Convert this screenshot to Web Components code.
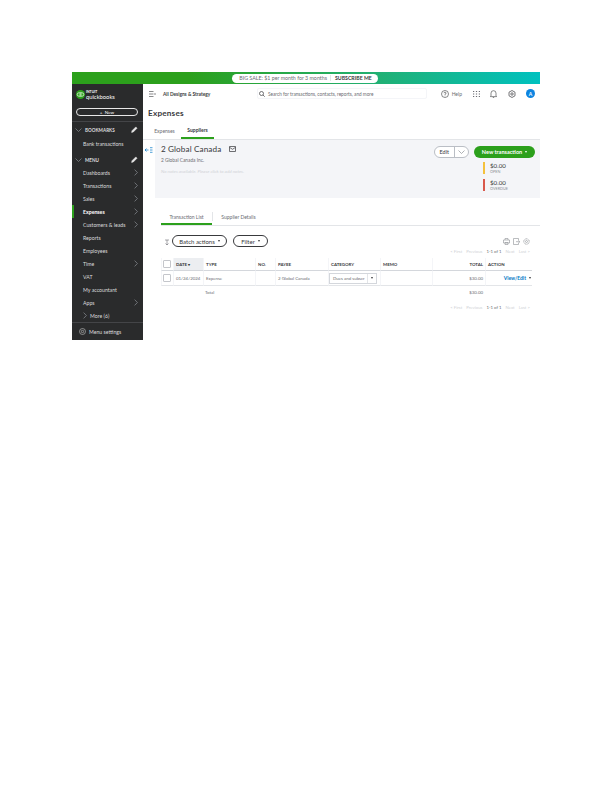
<!DOCTYPE html>
<html lang="en">
<head>
<meta charset="utf-8">
<title>Expenses</title>
<style>
  html, body { margin: 0; padding: 0; background: #fff; }
  body { padding: 72px 0 0 72px; font-family: Lato, "Open Sans", sans-serif; }
</style>
</head>
<body>
<qb-app></qb-app>
<script>
// ===== small helpers =====
function define(name, css, html) {
  customElements.define(name, class extends HTMLElement {
    constructor() {
      super();
      this.attachShadow({ mode: 'open' }).innerHTML = `<style>${css}</style>${typeof html === 'function' ? html(this) : html}`;
    }
  });
}

const chevron = '<svg width="4" height="7" viewBox="0 0 4 7"><path d="M.6.6 3.4 3.5.6 6.4" fill="none" stroke="#8d9096" stroke-width=".7"/></svg>';
const down = '<svg width="7" height="4" viewBox="0 0 7 4"><path d="M.5.5 3.5 3.5 6.5.5" fill="none" stroke="#8d9096" stroke-width=".7"/></svg>';
const pencil = '<svg width="7" height="7" viewBox="0 0 7 7"><path d="M.6 6.4 1 4.7 4.8.9 6.1 2.2 2.3 6Z" fill="#e8e8e8" stroke="#e8e8e8" stroke-width=".5"/></svg>';

define('promo-banner', `
  :host { display: flex; justify-content: center; align-items: center; height: 12px; background: linear-gradient(90deg, #2ca01c 0%, #2ca01c 25%, #21b073 65%, #00c1bf 100%); }
  .pill { display: flex; align-items: center; height: 9px; margin-right: 2px; padding: 0 6px 0 7px; border-radius: 5px; background: #fff; font-size: 5.3px; color: #6b6c72; white-space: nowrap; }
  b { margin-left: 3px; padding-left: 4px; border-left: 1px solid #e3e5e8; color: #393a3d; font-weight: 700; font-size: 5.2px; }
`, `<div class="pill">BIG SALE: $1 per month for 3 months<b>SUBSCRIBE ME</b></div>`);

define('side-item', `
  :host { display: flex; align-items: center; justify-content: space-between; height: 13px; padding: 0 5px 0 11px; font-size: 5.2px; color: #dcdcde; white-space: nowrap; }
  :host([active]) { box-shadow: inset 2px 0 0 #2ca01c; font-weight: 700; color: #fff; }
  :host([head]) { font-weight: 700; font-size: 4.6px; padding-left: 3px; }
  .l { display: flex; align-items: center; gap: 3px; }
`, el => `<span class="l"><slot name="pre"></slot><slot></slot></span><slot name="end"></slot>`);

define('qb-sidebar', `
  :host { display: flex; flex-direction: column; width: 71px; height: 256px; background: #2a2b2c; flex: none; }
  .logo { display: flex; align-items: center; gap: 1px; height: 20px; padding: 2px 0 0 4px; box-sizing: border-box; color: #fff; }
  .logo i { font-style: normal; display: block; font-size: 3.4px; font-weight: 700; line-height: 4px; }
  .logo span { display: block; font-size: 5.8px; line-height: 6px; }
  .new { display: flex; justify-content: center; align-items: center; height: 8px; box-sizing: border-box; margin: 4px 5px 5px 4px; border: 1px solid #e8e8e8; border-radius: 5px; color: #fff; font-size: 4.6px; }
  .sep { height: 1px; background: #444548; }
  .list { flex: 1; padding-top: 2px; }
  .g1 { height: 1px; }
  .g3 { height: 3px; }
  .foot { display: flex; align-items: center; gap: 3px; height: 17px; padding-left: 7px; border-top: 1px solid #444548; color: #dcdcde; font-size: 5.2px; }
`, `
  <div class="logo">
    <svg width="9" height="9" viewBox="0 0 11 11"><circle cx="5.5" cy="5.5" r="5.5" fill="#2ca01c"/><path d="M4.4 3.4H3.6a2 2 0 0 0 0 4.2h.8M6.6 7.6h.8a2 2 0 0 0 0-4.2h-.8M4.9 2.6v6M6.1 2.4v6" fill="none" stroke="#fff" stroke-width=".8"/></svg>
    <div><i>INTUIT</i><span>quickbooks</span></div>
  </div>
  <div class="new">+&nbsp;&nbsp;New</div>
  <div class="sep"></div>
  <div class="list">
    <side-item head><span slot="pre">${down}</span>BOOKMARKS<span slot="end">${pencil}</span></side-item>
    <div class="g1"></div>
    <side-item>Bank transactions</side-item>
    <div class="g3"></div>
    <side-item head><span slot="pre">${down}</span>MENU<span slot="end">${pencil}</span></side-item>
    <side-item>Dashboards<span slot="end">${chevron}</span></side-item>
    <side-item>Transactions<span slot="end">${chevron}</span></side-item>
    <side-item>Sales<span slot="end">${chevron}</span></side-item>
    <side-item active>Expenses<span slot="end">${chevron}</span></side-item>
    <side-item>Customers &amp; leads<span slot="end">${chevron}</span></side-item>
    <side-item>Reports</side-item>
    <side-item>Employees</side-item>
    <side-item>Time<span slot="end">${chevron}</span></side-item>
    <side-item>VAT</side-item>
    <side-item>My accountant</side-item>
    <side-item>Apps<span slot="end">${chevron}</span></side-item>
    <side-item><span slot="pre">${chevron}</span>More (6)</side-item>
  </div>
  <div class="foot"><svg width="7" height="7" viewBox="0 0 7 7"><circle cx="3.5" cy="3.5" r="3" fill="none" stroke="#c8c8c8" stroke-width=".6"/><circle cx="3.5" cy="3.5" r="1.2" fill="none" stroke="#c8c8c8" stroke-width=".6"/></svg>Menu settings</div>
`);

define('qb-topbar', `
  :host { display: flex; align-items: center; height: 19px; padding: 0 5px 0 6px; font-size: 5px; color: #393a3d; white-space: nowrap; }
  .co { margin-left: 7px; width: 94px; font-weight: 700; font-size: 4.8px; }
  .search { display: flex; align-items: center; gap: 3px; width: 170px; height: 11px; padding-left: 1px; box-sizing: border-box; border: 1px solid #f4f5f8; border-radius: 2px; color: #6b6c72; font-size: 4.7px; }
  .ic { display: flex; align-items: center; gap: 3px; color: #6b6c72; }
  .right { display: flex; align-items: center; gap: 10.5px; margin-left: auto; }
  .av { width: 9px; height: 9px; border-radius: 50%; background: #0d84e0; color: #fff; font-size: 5px; font-weight: 700; display: flex; align-items: center; justify-content: center; }
`, `
  <svg width="7" height="6" viewBox="0 0 7 6"><path d="M0 .5h4.5M0 3h4.5M0 5.5h4.5M5.5 2l1 1-1 1" fill="none" stroke="#393a3d" stroke-width=".6"/></svg>
  <span class="co">All Designs &amp; Strategy</span>
  <div class="search"><svg width="6" height="6" viewBox="0 0 6 6"><circle cx="2.5" cy="2.5" r="2" fill="none" stroke="#393a3d" stroke-width=".7"/><path d="M4 4l1.7 1.7" stroke="#393a3d" stroke-width=".7"/></svg>Search for transactions, contacts, reports, and more</div>
  <div class="right">
    <span class="ic"><svg width="8" height="8" viewBox="0 0 8 8"><circle cx="4" cy="4" r="3.5" fill="none" stroke="#393a3d" stroke-width=".6"/><path d="M3 3.2a1 1 0 1 1 1 1v.7M4 5.600v.6" fill="none" stroke="#393a3d" stroke-width=".6"/></svg>Help</span>
    <svg width="7" height="6" viewBox="0 0 7 6" fill="#6b6c72"><path d="M0 0h1.200v1H0zM2.900 0h1.200v1H2.900zM5.800 0H7v1H5.800zM0 2.500h1.200v1H0zM2.900 2.500h1.200v1H2.900zM5.800 2.500H7v1H5.800zM0 5h1.200v1H0zM2.900 5h1.200v1H2.900zM5.800 5H7v1H5.800z"/></svg>
    <svg width="7" height="8" viewBox="0 0 7 8"><path d="M1 6V3.200a2.500 2.500 0 0 1 5 0V6l.6.6H.4ZM2.800 7.500h1.400" fill="none" stroke="#393a3d" stroke-width=".6"/></svg>
    <svg width="8" height="8" viewBox="0 0 8 8"><path d="M4 .5 7 2.200v3.600L4 7.500 1 5.800V2.200Z" fill="none" stroke="#393a3d" stroke-width=".7"/><circle cx="4" cy="4" r="1.200" fill="none" stroke="#393a3d" stroke-width=".7"/></svg>
    <span class="av">A</span>
  </div>
`);

define('tab-row', `
  :host { display: flex; border-bottom: 1px solid #e3e5e8; font-size: 5px; color: #6b6c72; white-space: nowrap; }
  ::slotted(span) { display: block; }
`, `<slot></slot>`);

define('summary-stat', `
  :host { display: flex; align-items: stretch; gap: 5px; height: 12px; color: #6b6c72; }
  i { width: 2px; background: var(--c); }
  b { display: block; font-weight: 400; font-size: 6.2px; line-height: 7px; color: #393a3d; }
  span { display: block; font-size: 3.8px; line-height: 5px; color: #8d9096; }
`, el => `<i style="--c:${el.getAttribute('color')}"></i><div><b>$0.00</b><span>${el.getAttribute('label')}</span></div>`);

define('supplier-panel', `
  :host { display: flex; justify-content: space-between; position: relative; height: 58px; margin-left: 12px; padding: 3px 5px 0 6px; box-sizing: border-box; background: #f4f5f8; color: #393a3d; white-space: nowrap; }
  .handle { position: absolute; left: -10px; top: 7px; display: flex; }
  h2 { display: flex; align-items: center; gap: 8px; margin: 0; height: 12px; font-weight: 400; font-size: 8.2px; letter-spacing: .1px; }
  p { margin: 2px 0 0; font-size: 4.8px; color: #6b6c72; }
  .note { margin-top: 6px; font-style: italic; color: #d0d2d6; font-size: 4.5px; }
  .right { width: 100px; display: flex; flex-direction: column; align-items: flex-end; }
  .btns { display: flex; align-items: center; gap: 5px; height: 12px; margin-top: 3px; }
  .edit { display: flex; align-items: center; height: 12px; box-sizing: border-box; border: 1px solid #babec5; border-radius: 6px; font-size: 5.5px; background: #fff; }
  .edit span { padding: 0 5px; line-height: 10px; }
  .edit em { display: flex; align-items: center; height: 10px; padding: 0 3px; border-left: 1px solid #babec5; }
  .new { display: flex; align-items: center; justify-content: center; gap: 3px; width: 61px; height: 12px; border-radius: 6px; background: #2ca01c; color: #fff; font-size: 5.5px; font-weight: 700; }
  .new u { width: 0; height: 0; border: 1.5px solid transparent; border-top: 2px solid #fff; border-bottom: 0; }
  .stats { align-self: flex-end; width: 52px; margin-top: 4px; display: flex; flex-direction: column; gap: 5px; }
`, `
  <div class="handle"><svg width="8" height="6" viewBox="0 0 8 6"><path d="M3.5 3H0M1.5 1.500 0 3l1.500 1.500M5 .7h2.500M5 3h2.500M5 5.300h2.500" fill="none" stroke="#0077c5" stroke-width=".7"/></svg></div>
  <div>
    <h2>2 Global Canada<svg width="7" height="6" viewBox="0 0 7 6"><rect x=".4" y=".4" width="6.2" height="5.2" rx=".5" fill="none" stroke="#393a3d" stroke-width=".8"/><path d="M.6 1.4 3.500 3.300 6.400 1.400" fill="none" stroke="#393a3d" stroke-width=".7"/></svg></h2>
    <p>2 Global Canada Inc.</p>
    <p class="note">No notes available. Please click to add notes.</p>
  </div>
  <div class="right">
    <div class="btns">
      <div class="edit"><span>Edit</span><em>${down}</em></div>
      <div class="new">New transaction <u></u></div>
    </div>
    <div class="stats">
      <summary-stat color="#f4c13d" label="OPEN"></summary-stat>
      <summary-stat color="#d9594c" label="OVERDUE"></summary-stat>
    </div>
  </div>
`);

define('qb-button', `
  :host { display: inline-flex; align-items: center; justify-content: center; gap: 3px; height: 12px; box-sizing: border-box; border: 1px solid #393a3d; border-radius: 6px; font-size: 6px; color: #393a3d; white-space: nowrap; }
  u { width: 0; height: 0; border: 1.5px solid transparent; border-top: 2px solid #393a3d; border-bottom: 0; }
`, `<slot></slot><u></u>`);

define('pager-line', `
  :host { display: flex; justify-content: flex-end; gap: 4px; font-size: 4.3px; color: #d0d2d6; white-space: nowrap; }
  b { font-weight: 400; color: #6b6c72; }
`, `<span>&lt; First</span><span>Previous</span><b>1-1 of 1</b><span>Next</span><span>Last &gt;</span>`);

define('tx-table', `
  :host { display: block; font-size: 4.4px; color: #6b6c72; white-space: nowrap; }
  .grid { display: grid; grid-template-columns: 12px 30px 52px 20px 53px 52px 52px 53px 47px; }
  .grid > div { display: flex; align-items: center; padding-left: 2px; box-sizing: border-box; }
  .h > div { height: 13px; font-weight: 700; color: #393a3d; border-left: 1px solid #f4f5f8; border-bottom: 1px solid #d4d7dc; }
  .h > .s { background: #eceef1; }
  .r > div { height: 15px; border-left: 1px solid #f4f5f8; border-bottom: 1px solid #e3e5e8; }
  .t > div { height: 13px; }
  .grid > .c { padding-left: 1px; }
  .grid > .cat { padding-left: 0; }
  .n { justify-content: flex-end; padding-right: 2px; }
  .cb { width: 8px; height: 8px; box-sizing: border-box; border: 1px solid #c4c6cb; border-radius: 1px; background: #fff; flex: none; }
  .sel { display: flex; align-items: center; justify-content: space-between; width: 48px; height: 11px; padding: 0 0 0 3px; border: 1px solid #d4d7dc; box-sizing: border-box; }
  .sel em { height: 100%; padding: 0 3px; border-left: 1px solid #e3e5e8; display: flex; align-items: center; }
  u { width: 0; height: 0; border: 1.5px solid transparent; border-top: 2px solid #393a3d; border-bottom: 0; }
  .a { color: #0077c5; font-weight: 700; justify-content: flex-end; gap: 3px; padding-right: 1px; font-size: 5px; }
`, `
  <div class="grid h">
    <div class="c"><span class="cb"></span></div><div class="s">DATE&nbsp;▾</div><div>TYPE</div><div>NO.</div><div>PAYEE</div><div>CATEGORY</div><div>MEMO</div><div class="n">TOTAL</div><div>ACTION</div>
  </div>
  <div class="grid r">
    <div class="c"><span class="cb"></span></div><div>01/24/2024</div><div>Expense</div><div></div><div>2 Global Canada</div><div class="cat"><span class="sel">Dues and subscr<em><u></u></em></span></div><div></div><div class="n">$30.00</div><div class="a">View/Edit <u></u></div>
  </div>
  <div class="grid t">
    <div></div><div></div><div>Total</div><div></div><div></div><div></div><div></div><div class="n">$30.00</div><div></div>
  </div>
`);

define('qb-main', `
  :host { display: block; width: 397px; height: 256px; color: #393a3d; }
  h1 { margin: 0; height: 20px; padding: 0 0 0 5px; font-size: 8.2px; line-height: 20px; font-weight: 700; letter-spacing: .2px; }
  tab-row.top { height: 16px; padding-left: 5px; }
  .t { display: flex; height: 15px; align-items: center; justify-content: center; box-sizing: border-box; }
  .on { border-bottom: 2px solid #2ca01c; height: 16px; color: #393a3d; font-weight: 700; }
  .body { padding: 12px 8px 0 18px; }
  tab-row.inner { height: 15px; margin-right: -8px; }
  .inner .t { height: 13px; margin-top: 2px; }
  .tools { position: relative; display: flex; align-items: center; gap: 6px; margin-top: 9px; padding-left: 11px; height: 12px; }
  .sort { position: absolute; left: 3px; top: 4px; }
  .sideicons { position: absolute; right: 2px; top: 3px; display: flex; gap: 3px; }
  .pg1 { height: 8px; margin: 2px 2px 1px 0; }
  .pg2 { margin: 6px 2px 0 0; }
`, `
  <qb-topbar></qb-topbar>
  <h1>Expenses</h1>
  <tab-row class="top"><span class="t" style="width:33px">Expenses</span><span class="t on" style="width:33px">Suppliers</span></tab-row>
  <supplier-panel></supplier-panel>
  <div class="body">
    <tab-row class="inner"><span class="t on" style="width:51px;height:15px;margin:0;font-weight:400;color:#6b6c72">Transaction List</span><span class="t" style="width:52px;height:9px;margin-top:2px;border-left:1px solid #e3e5e8">Supplier Details</span></tab-row>
    <div class="tools">
      <svg class="sort" width="6" height="7" viewBox="0 0 6 7"><path d="M1 1h4M3 1v5M1.5 4.5 3 6l1.500-1.500" fill="none" stroke="#6b6c72" stroke-width=".6"/></svg>
      <qb-button style="width:55px">Batch actions</qb-button>
      <qb-button style="width:35px">Filter</qb-button>
      <div class="sideicons">
        <svg width="7" height="7" viewBox="0 0 7 7"><path d="M2 2V.5h3V2M.5 2h6v3h-6ZM2 4.500h3v2H2Z" fill="none" stroke="#8d9096" stroke-width=".6"/></svg>
        <svg width="7" height="7" viewBox="0 0 7 7"><path d="M5.5 2.500V.5h-5v6h5V5M3 3.700h3.800M5.600 2.500l1.200 1.200L5.600 5" fill="none" stroke="#8d9096" stroke-width=".6"/></svg>
        <svg width="7" height="7" viewBox="0 0 7 7"><circle cx="3.5" cy="3.5" r="2.7" fill="none" stroke="#8d9096" stroke-width=".8" stroke-dasharray="1 .5"/><circle cx="3.5" cy="3.5" r="1" fill="none" stroke="#8d9096" stroke-width=".6"/></svg>
      </div>
    </div>
    <pager-line class="pg1"></pager-line>
    <tx-table></tx-table>
    <pager-line class="pg2"></pager-line>
  </div>
`);

define('qb-app', `
  :host { display: block; width: 468px; height: 268px; overflow: hidden; background: #fff; }
  .row { display: flex; }
`, `
  <promo-banner></promo-banner>
  <div class="row"><qb-sidebar></qb-sidebar><qb-main></qb-main></div>
`);
</script>
</body>
</html>
